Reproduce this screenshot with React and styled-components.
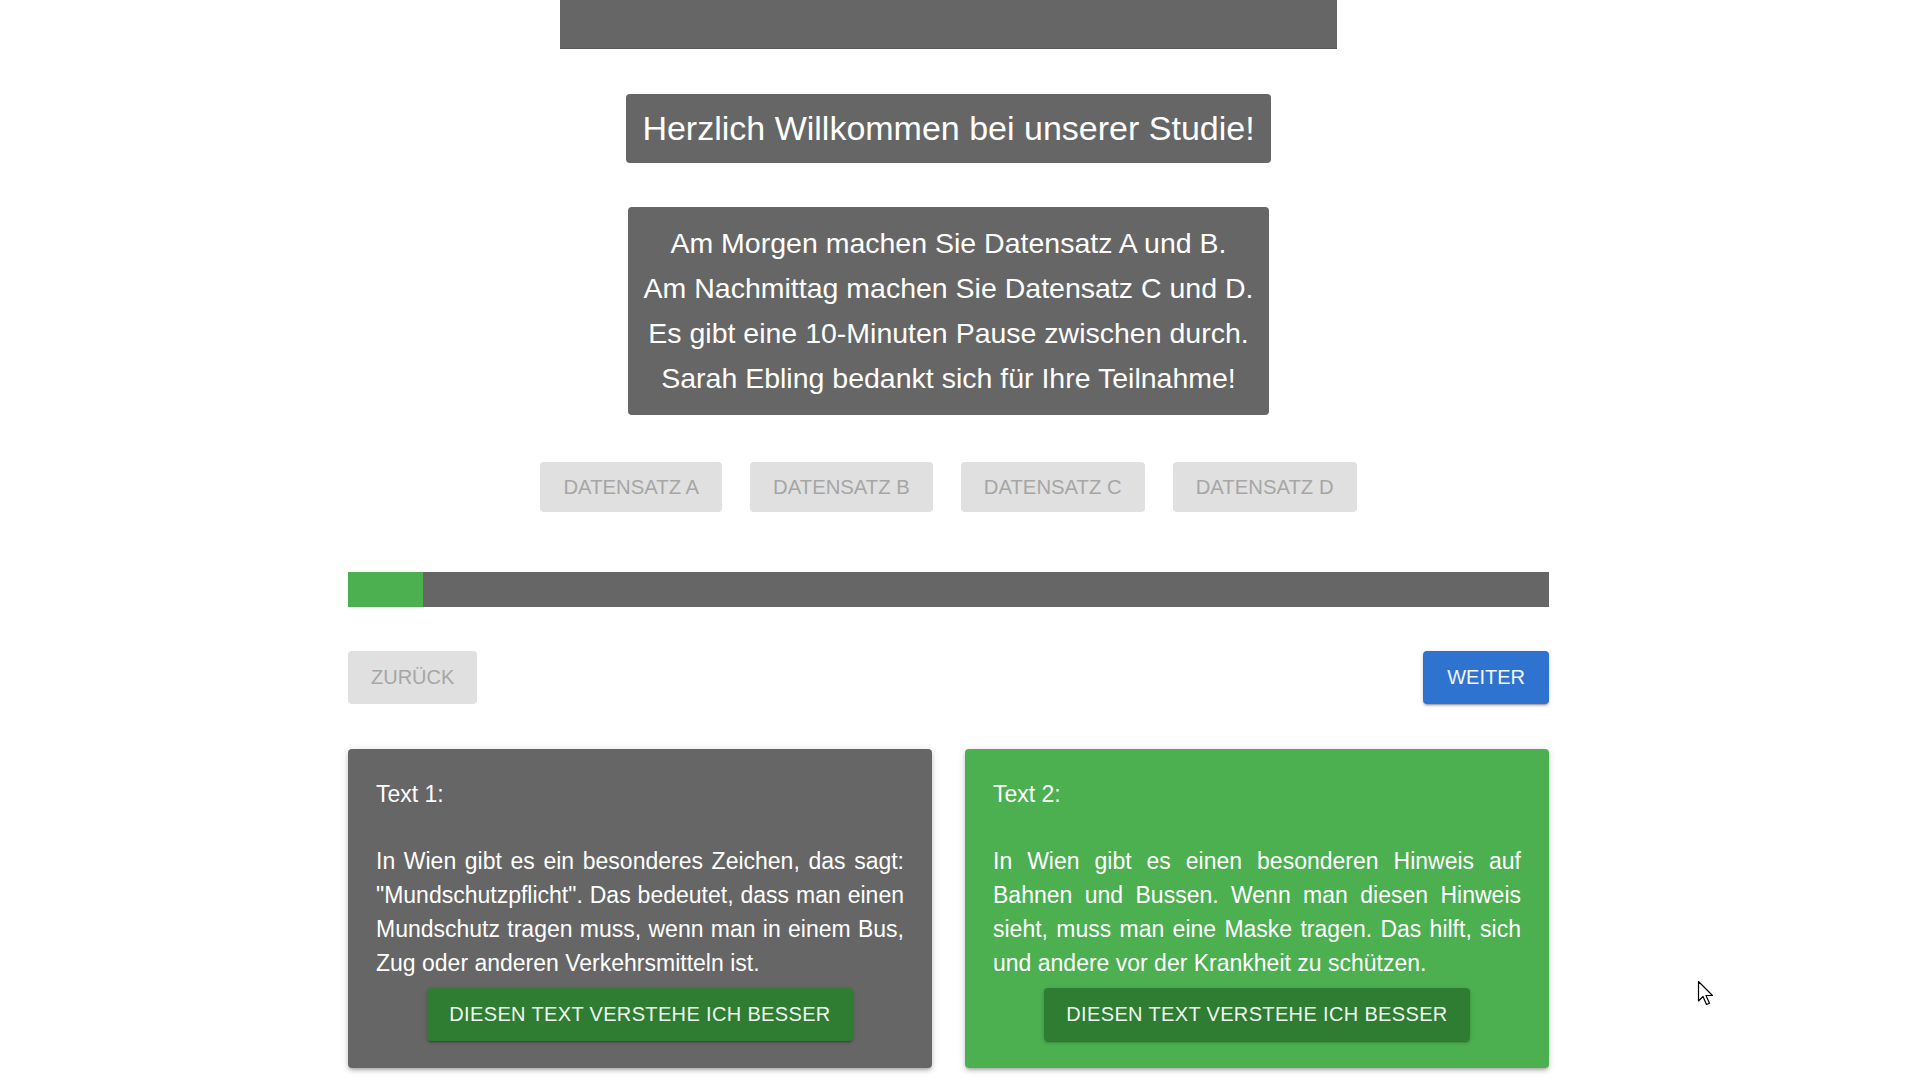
import React from 'react'
import styled, { createGlobalStyle } from 'styled-components'

const GlobalStyle = createGlobalStyle`
    html, body {
        margin: 0;
        padding: 0;
        background: #ffffff;
    }
    body {
        font-family: "Liberation Sans", Arial, sans-serif;
    }
`;

const Screen = styled.div`
    position: relative;
    width: 1920px;
    height: 1080px;
    overflow: hidden;
    padding-right: 23px;
    box-sizing: border-box;
`;

const Page = styled.main`
    width: 1201px;
    margin: 0 auto;
    display: flex;
    flex-direction: column;
    align-items: center;
`;

const TopBar = styled.div`
    width: 777px;
    height: 49px;
    background: #666666;
    border-bottom: 1px solid #5a5a5a;
    box-sizing: border-box;
`;

const Title = styled.h1`
    margin: 45px 0 0;
    padding: 0 16px;
    height: 69px;
    line-height: 69px;
    background: #666666;
    color: #ffffff;
    font-size: 34px;
    font-weight: normal;
    border-radius: 4px;
`;

const Info = styled.div`
    margin-top: 44px;
    padding: 14px 16px;
    background: #666666;
    color: #ffffff;
    font-size: 28.5px;
    line-height: 45px;
    text-align: center;
    border-radius: 4px;
`;

const DatasetRow = styled.div`
    margin-top: 47px;
    display: flex;
    gap: 28px;
`;

const GreyButton = styled.button`
    height: ${p => p.$tall ? '53px' : '50px'};
    padding: 0 23px;
    border: none;
    border-radius: 4px;
    background: #e0e0e0;
    color: #a6a6a6;
    font-family: "Liberation Sans", Arial, sans-serif;
    font-size: ${p => p.$tall ? '20px' : '20.3px'};
    text-transform: uppercase;
`;

const Progress = styled.div`
    margin-top: 60px;
    width: 100%;
    height: 35px;
    background: #666666;
    display: flex;
`;

const ProgressFill = styled.div`
    height: 100%;
    background: #4caf50;
`;

const NavRow = styled.div`
    margin-top: 44px;
    width: 100%;
    display: flex;
    justify-content: space-between;
`;

const BlueButton = styled.button`
    height: 53px;
    padding: 0 24px;
    border: none;
    border-radius: 4px;
    background: #2f73d1;
    color: #f2f7ff;
    font-family: "Liberation Sans", Arial, sans-serif;
    font-size: 20px;
    box-shadow: 0 3px 1px -2px rgba(0,0,0,.2), 0 2px 2px 0 rgba(0,0,0,.14), 0 1px 5px 0 rgba(0,0,0,.12);
`;

const CardRow = styled.div`
    margin-top: 45px;
    width: 100%;
    display: grid;
    grid-template-columns: 1fr 1fr;
    gap: 33px;
`;

const Card = styled.section`
    background: ${p => p.$chosen ? '#4caf50' : '#666666'};
    color: #ffffff;
    border-radius: 4px;
    padding: 29px 28px 27px;
    display: flex;
    flex-direction: column;
    align-items: center;
    box-shadow: 0 3px 3px -2px rgba(0,0,0,.2), 0 3px 4px 0 rgba(0,0,0,.14), 0 1px 8px 0 rgba(0,0,0,.12);
`;

const CardText = styled.div`
    width: 100%;
    font-size: 23px;
    line-height: 33.7px;
    text-align: justify;
`;

const ChooseButton = styled.button`
    margin-top: 8px;
    height: 53px;
    padding: 0 22px;
    border: none;
    border-radius: 4px;
    background: #2e7d32;
    color: #eef8ee;
    font-family: "Liberation Sans", Arial, sans-serif;
    font-size: 20px;
    letter-spacing: 0.35px;
    box-shadow: 0 3px 1px -2px rgba(0,0,0,.2), 0 2px 2px 0 rgba(0,0,0,.14), 0 1px 5px 0 rgba(0,0,0,.12);
`;

const Pointer = styled.svg`
    position: absolute;
    left: 1697px;
    top: 980px;
    width: 22px;
    height: 28px;
`;

const texts = [
    {
        label: 'Text 1:',
        body: 'In Wien gibt es ein besonderes Zeichen, das sagt: "Mundschutzpflicht". Das bedeutet, dass man einen Mundschutz tragen muss, wenn man in einem Bus, Zug oder anderen Verkehrsmitteln ist.',
        chosen: false
    },
    {
        label: 'Text 2:',
        body: 'In Wien gibt es einen besonderen Hinweis auf Bahnen und Bussen. Wenn man diesen Hinweis sieht, muss man eine Maske tragen. Das hilft, sich und andere vor der Krankheit zu schützen.',
        chosen: true
    }
]

export default function App() {
    const step = 1
    const steps = 16

    return (
        <Screen>
            <GlobalStyle />
            <Page>
                <TopBar />
                <Title>Herzlich Willkommen bei unserer Studie!</Title>
                <Info>
                    Am Morgen machen Sie Datensatz A und B.<br />
                    Am Nachmittag machen Sie Datensatz C und D.<br />
                    Es gibt eine 10-Minuten Pause zwischen durch.<br />
                    Sarah Ebling bedankt sich für Ihre Teilnahme!
                </Info>
                <DatasetRow>
                    {['A', 'B', 'C', 'D'].map(s => (
                        <GreyButton key={s} disabled>Datensatz {s}</GreyButton>
                    ))}
                </DatasetRow>
                <Progress>
                    <ProgressFill style={{ width: `${(step / steps) * 100}%` }} />
                </Progress>
                <NavRow>
                    <GreyButton $tall disabled>Zurück</GreyButton>
                    <BlueButton>WEITER</BlueButton>
                </NavRow>
                <CardRow>
                    {texts.map(t => (
                        <Card key={t.label} $chosen={t.chosen}>
                            <CardText>
                                {t.label}<br /><br />
                                {t.body}
                            </CardText>
                            <ChooseButton>DIESEN TEXT VERSTEHE ICH BESSER</ChooseButton>
                        </Card>
                    ))}
                </CardRow>
            </Page>
            <Pointer viewBox="0 0 22 28">
                <path d="M1.5 1.5 L1.5 21 L6 16.5 L9.5 24.5 L12.5 23.2 L9 15.5 L15.5 15.5 Z" fill="#ffffff" stroke="#000000" strokeWidth="1.2" strokeLinejoin="round" />
            </Pointer>
        </Screen>
    )
}
